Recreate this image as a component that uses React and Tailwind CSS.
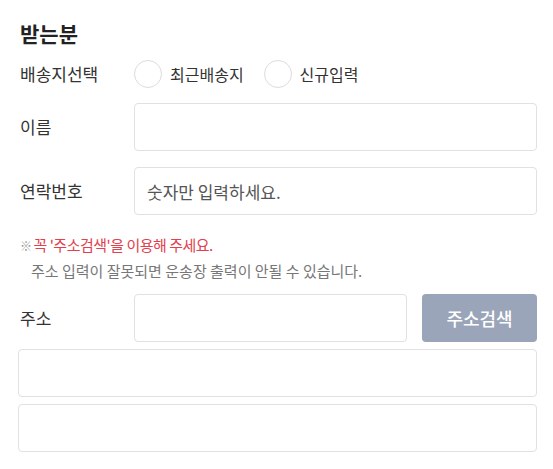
import React, { useState } from 'react';

const font = { fontFamily: '"Noto Sans CJK KR", "Noto Sans", sans-serif' };

function Radio({ label, checked, onChange }) {
  return (
    <label className="flex items-center cursor-pointer" onClick={onChange}>
      <span className={`w-[28px] h-[28px] rounded-full border-[1.5px] ${checked ? 'border-[#9aa5b9]' : 'border-[#dcdcdc]'} bg-white shrink-0`} />
      <span className="ml-[8px] text-[16px] text-[#333] leading-none">{label}</span>
    </label>
  );
}

export default function App() {
  const [target, setTarget] = useState(null);
  const inputCls = 'h-[48px] w-full rounded-[4px] border-[1.5px] border-[#e1e1e1] bg-white px-[12px] text-[17px] text-[#333] placeholder:text-[#555] outline-none';
  const labelCls = 'w-[116px] shrink-0 pl-[2px] text-[17px] text-[#333]';

  return (
    <div className="w-[553px] bg-white pl-[18px] pr-[16px] pt-[19px] pb-[18px]" style={font}>
      <h2 className="pl-[2px] text-[21px] font-bold leading-[28px] text-[#222]">받는분</h2>

      <div className="mt-[13px] flex items-center h-[28px]">
        <span className={labelCls}>배송지선택</span>
        <div className="flex items-center gap-[20px]">
          <Radio label="최근배송지" checked={target === 'recent'} onChange={() => setTarget('recent')} />
          <Radio label="신규입력" checked={target === 'new'} onChange={() => setTarget('new')} />
        </div>
      </div>

      <div className="mt-[15px] flex items-center">
        <span className={labelCls}>이름</span>
        <input className={inputCls} />
      </div>

      <div className="mt-[16px] flex items-center">
        <span className={labelCls}>연락번호</span>
        <input className={inputCls} placeholder="숫자만 입력하세요." />
      </div>

      <div className="mt-[17px] pl-[2px] text-[15px] leading-[25px]">
        <p className="text-[#e2404c] tracking-[-0.5px]"><span className="text-[#999] text-[12px] mr-[2px]">※</span>꼭 '주소검색'을 이용해 주세요.</p>
        <p className="pl-[11px] text-[#777]">주소 입력이 잘못되면 운송장 출력이 안될 수 있습니다.</p>
      </div>

      <div className="mt-[11px] flex items-center">
        <span className={labelCls}>주소</span>
        <input className={`${inputCls} flex-1`} />
        <button className="ml-[15px] h-[48px] w-[115px] shrink-0 rounded-[4px] bg-[#9aa5b9] text-[18px] font-medium text-white">주소검색</button>
      </div>

      <input className={`${inputCls} mt-[7px] block`} />
      <input className={`${inputCls} mt-[7px] block`} />
    </div>
  );
}
